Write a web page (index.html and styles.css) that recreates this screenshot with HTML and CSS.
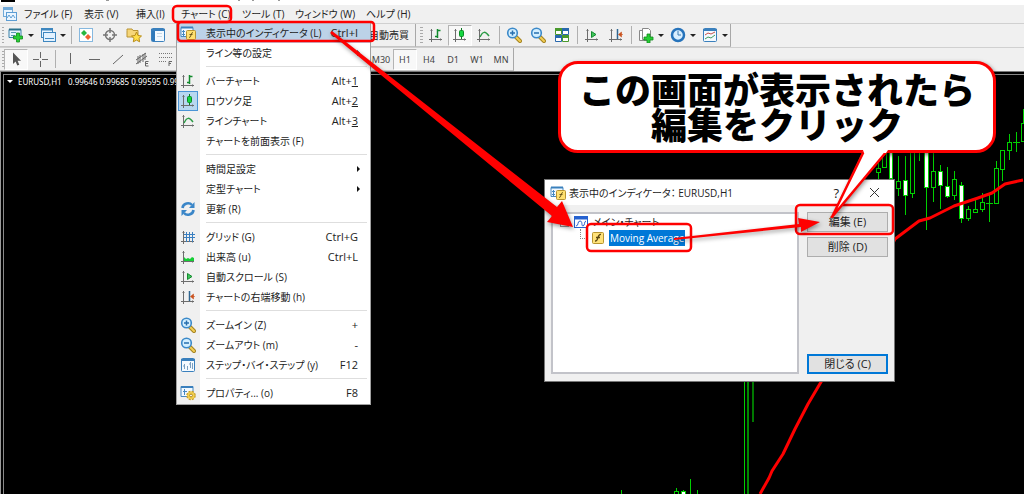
FILE: index.html
```html
<!DOCTYPE html>
<html lang="ja">
<head>
<meta charset="utf-8">
<title>EURUSD,H1</title>
<link rel="stylesheet" href="styles.css">
</head>
<body>
<svg class="defs" aria-hidden="true">
  <defs>
    <symbol id="axes" viewBox="0 0 16 16"><path d="M3.500 2v13M1 12.500h13M2.500 3.500h2M12.500 11.500v2" fill="none" stroke="#6c6c6c"/></symbol>
    <symbol id="bar" viewBox="0 0 16 16"><use href="#axes"/><path d="M9.500 2v9M9.500 3.500h3M7 9.500h2.500" fill="none" stroke="#118a2c" stroke-width="1.500"/></symbol>
    <symbol id="candle" viewBox="0 0 16 16"><use href="#axes"/><path d="M9.500 1v11" stroke="#0a7a20"/><rect x="7.500" y="3.500" width="4" height="6" rx="1" fill="#14d540" stroke="#0a8a24"/></symbol>
    <symbol id="line" viewBox="0 0 16 16"><use href="#axes"/><path d="M4 10c3-6 5-6 9-1" fill="none" stroke="#2a9a45" stroke-width="1.500"/></symbol>
    <symbol id="volume" viewBox="0 0 16 16"><use href="#axes"/><path d="M4 12V8l2 2 2-1 2 1 2-2 2 1v3z" fill="#15cf35"/></symbol>
    <symbol id="grid" viewBox="0 0 16 16"><use href="#axes"/><path d="M6.500 3v10M9.500 3v10M12.500 3v10M4 5.500h11M4 8.500h11" fill="none" stroke="#3a7fc0"/></symbol>
    <symbol id="scroll" viewBox="0 0 16 16"><use href="#axes"/><path d="M7.500 4.500l4.500 3-4.500 3z" fill="#3fc65b" stroke="#168a30"/></symbol>
    <symbol id="shift" viewBox="0 0 16 16"><use href="#axes"/><path d="M9.500 2v10" stroke="#2f6590" stroke-width="1.500"/><path d="M15 7.500h-3M10.500 7.500l3-2.500v5z" fill="#c9501c" stroke="#c9501c" stroke-width=".6"/></symbol>
    <symbol id="refresh" viewBox="0 0 16 16"><path d="M2.500 7c.5-5 7-6 9.500-3M13.500 9c-.5 5-7 6-9.500 3" fill="none" stroke="#3a86c8" stroke-width="2.600"/><path d="M14.500 1v6H9zM1.500 15V9H7z" fill="#3a86c8"/></symbol>
    <symbol id="lens" viewBox="0 0 16 16"><path d="M10 10l4 4" stroke="#a58320" stroke-width="4" stroke-linecap="round"/><path d="M10 10l4 4" stroke="#f3cf55" stroke-width="2" stroke-linecap="round"/><circle cx="6.500" cy="6" r="4.800" fill="#d3efff" stroke="#3b89c9" stroke-width="1.600"/></symbol>
    <symbol id="zoomin" viewBox="0 0 16 16"><use href="#lens"/><path d="M4 6h5M6.500 3.500v5" stroke="#276fae" stroke-width="1.500"/></symbol>
    <symbol id="zoomout" viewBox="0 0 16 16"><use href="#lens"/><path d="M4 6h5" stroke="#276fae" stroke-width="1.500"/></symbol>
    <symbol id="window" viewBox="0 0 16 16"><rect x="1.500" y="1.500" width="13" height="13" rx="1" fill="#f4faff" stroke="#3a80bd"/><path d="M1 3h14" stroke="#3a80bd" stroke-width="2"/></symbol>
    <symbol id="step" viewBox="0 0 16 16"><use href="#window"/><path d="M4.500 7v5M7.500 9v4M10.500 5v6M12.500 6v6M3 9h2M9 7h2" stroke="#7a9fc0" fill="none"/></symbol>
    <symbol id="indicator" viewBox="0 0 16 16"><path d="M1 2.500h12v9H1z" fill="#f2f9ff" stroke="#4789c2"/><path d="M1 2.500h12" stroke="#3a80bd" stroke-width="2"/><path d="M3.500 5v6M2 6.500h3M2 9.500h3" stroke="#4789c2"/><rect x="6.500" y="5.500" width="9" height="9" rx="1" fill="#ffe070" stroke="#b89432"/><path d="M13 7.500c-3 0-1 5-4 5M9.500 9.500h3" fill="none" stroke="#6d581c"/></symbol>
    <symbol id="props" viewBox="0 0 16 16"><path d="M1 1.500h12v10H1z" fill="#f2f9ff" stroke="#4789c2"/><path d="M1 2h12" stroke="#3a80bd" stroke-width="2"/><path d="M3 6.500h4M4.500 4v6" stroke="#4789c2"/><circle cx="11" cy="10.500" r="3.800" fill="#f3cf4d" stroke="#c79f2c" stroke-dasharray="2 1" stroke-width="2"/><circle cx="11" cy="10.500" r="3.500" fill="#f3cf4d"/><circle cx="11" cy="10.500" r="1.400" fill="#fff" stroke="#b08a20"/></symbol>
    <symbol id="neworder" viewBox="0 0 16 16"><path d="M1 2.500h12v8H1z" fill="#e8f5ff" stroke="#3a80a8"/><path d="M1 2.500h12" stroke="#2a718c" stroke-width="2"/><path d="M3 5.500h5M3 8.500h4" stroke="#5a9ab4"/><path d="M8.500 6h3v3h3v3h-3v3h-3v-3h-3V9h3z" fill="#27cf35" stroke="#118a1c" stroke-width=".8"/></symbol>
    <symbol id="windows" viewBox="0 0 16 16"><rect x="1.500" y="1.500" width="11" height="9" fill="#eaf5ff" stroke="#3f87bf"/><path d="M1 2.500h12" stroke="#3f87bf" stroke-width="2"/><rect x="3.500" y="5.500" width="12" height="9" fill="#e3f2ff" stroke="#3f87bf"/><path d="M5 11.500h9" stroke="#3f87bf"/></symbol>
    <symbol id="market" viewBox="0 0 16 16"><rect x="1.500" y="1.500" width="13" height="13" fill="#fff" stroke="#86b8df"/><path d="M6 3l3 3-3 3-3-3z" fill="#27b740"/><path d="M10 7l3 3-3 3-3-3z" fill="#f06030"/></symbol>
    <symbol id="target" viewBox="0 0 16 16"><circle cx="8" cy="8" r="4.500" fill="none" stroke="#777" stroke-width="1.500"/><path d="M8 1v5M8 10v5M1 8h5M10 8h5" stroke="#777" stroke-width="1.500"/></symbol>
    <symbol id="favorite" viewBox="0 0 16 16"><path d="M1 3.500V2h5l1 1.500h5V10H1z" fill="#f6d679" stroke="#b99434"/><path d="M10.500 5l1.500 3.500 3.500.5-2.500 2.300.6 3.500-3.100-1.700-3.200 1.700.7-3.500L5.500 9l3.500-.5z" fill="#ffde48" stroke="#b88c18"/></symbol>
    <symbol id="panel" viewBox="0 0 16 16"><use href="#window"/><path d="M2 4h3v10H2z" fill="#2f79ba"/><path d="M7 6.500h5M7 9.500h5" stroke="#c6d8e6"/></symbol>
    <symbol id="tiles" viewBox="0 0 16 16"><path d="M1.500 1.500h6v6h-6z" fill="#fff" stroke="#49992c"/><path d="M8.500 1.500h6v6h-6z" fill="#fff" stroke="#2868ad"/><path d="M1.500 8.500h6v6h-6z" fill="#fff" stroke="#2868ad"/><path d="M8.500 8.500h6v6h-6z" fill="#fff" stroke="#49992c"/><path d="M1 2.500h7M8 9.500h7" stroke="#49992c" stroke-width="3"/><path d="M8 2.500h7M1 9.500h7" stroke="#2868ad" stroke-width="3"/></symbol>
    <symbol id="addind" viewBox="0 0 16 16"><path d="M1.500 3.500h8v10h-8z" fill="#fff" stroke="#888"/><path d="M4.500 1.500h6l2 2v9h-8z" fill="#fff" stroke="#888"/><path d="M9 7h3v3h3v3h-3v3H9v-3H6v-3h3z" fill="#27cf35" stroke="#118a1c" stroke-width=".8"/></symbol>
    <symbol id="clock" viewBox="0 0 16 16"><circle cx="8" cy="8" r="6" fill="#d9efff" stroke="#2673bb" stroke-width="2.500"/><path d="M8 4v4h3" fill="none" stroke="#3f7cb2"/></symbol>
    <symbol id="template" viewBox="0 0 16 16"><use href="#window"/><path d="M3 8l3-2 3 1 4-2" fill="none" stroke="#c5524b"/><path d="M3 12l3-2 3 1 4-3" fill="none" stroke="#3f9c5e"/></symbol>
    <symbol id="pointer" viewBox="0 0 16 16"><path d="M5 1.500v11.500l2.600-2.400 1.700 4 2-.9-1.700-3.900H13z" fill="#555"/></symbol>
    <symbol id="cross" viewBox="0 0 16 16"><path d="M8.500 1v6M8.500 10v6M1 8.500h6M10 8.500h6" stroke="#666"/></symbol>
    <symbol id="vline" viewBox="0 0 16 16"><path d="M8.500 2v11" stroke="#666"/></symbol>
    <symbol id="hline" viewBox="0 0 16 16"><path d="M3 8.500h11" stroke="#666"/></symbol>
    <symbol id="trend" viewBox="0 0 16 16"><path d="M3 13L13 4" stroke="#666"/></symbol>
    <symbol id="channel" viewBox="0 0 16 16"><path d="M2 9l10-7M2 13L13 5M4 5v8M6 4v8M9 3v8M11 2v7" stroke="#666"/><path d="M14.500 10.500h-3v4.500h3M11.500 12.500h2.500" fill="none" stroke="#666"/></symbol>
    <symbol id="fibo" viewBox="0 0 16 16"><path d="M1 2.500h14M1 6.500h14M1 10.500h8" stroke="#777" stroke-dasharray="1 1"/><path d="M14 10.500h-3V15M11 12.500h2" fill="none" stroke="#666"/></symbol>
    <symbol id="func" viewBox="0 0 16 16"><rect x="2.500" y="2.500" width="11" height="11" rx="1" fill="#ffe27a" stroke="#b8952e"/><path d="M11 4.500c-4-1-2 7-6 6.500M6 7.500h4" fill="none" stroke="#5c4812" stroke-width="1.300"/></symbol>
    <symbol id="mainchart" viewBox="0 0 16 16"><rect x="1.500" y="2.500" width="13" height="11" fill="#fff" stroke="#2662d0"/><path d="M1 4h14" stroke="#2662d0" stroke-width="3"/><path d="M3 12c3 0 1-5 4-5s1 5 3 5 1-5 3-5" fill="none" stroke="#2662d0"/></symbol>
    <symbol id="app" viewBox="0 0 16 16"><rect x="1.500" y="1.500" width="9" height="9" fill="#eaf5ff" stroke="#70a9d8"/><path d="M1 3h10" stroke="#70a9d8" stroke-width="2"/><rect x="4.500" y="6.500" width="10" height="8" fill="#eaf5ff" stroke="#5d9dd3"/><path d="M5 12l2-3 2 3 2-3 2 3" fill="none" stroke="#5d9dd3"/></symbol>
  </defs>
</svg>

<div class="titlebar"><svg width="340" height="5" aria-hidden="true"><path d="M1 0h14v2H1z" fill="#000"/><path d="M106 .5h3M238 .5h2M252 .5h2M278 .5h2" stroke="#999"/></svg></div>

<nav class="menubar">
  <svg class="icon app-icon"><use href="#app"/></svg>
  <button>ファイル (F)</button>
  <button>表示 (V)</button>
  <button>挿入(I)</button>
  <button class="open">チャート (C)</button>
  <button>ツール (T)</button>
  <button>ウィンドウ (W)</button>
  <button>ヘルプ (H)</button>
</nav>

<div class="toolbar">
  <div class="group group-main">
    <button class="tool drop" aria-label="新規チャート"><svg class="icon"><use href="#neworder"/></svg></button>
    <button class="tool drop" aria-label="ウィンドウ"><svg class="icon"><use href="#windows"/></svg></button>
    <span class="divider"></span>
    <button class="tool" aria-label="気配値"><svg class="icon"><use href="#market"/></svg></button>
    <button class="tool" aria-label="データ"><svg class="icon"><use href="#target"/></svg></button>
    <button class="tool" aria-label="お気に入り"><svg class="icon"><use href="#favorite"/></svg></button>
    <button class="tool" aria-label="ターミナル"><svg class="icon"><use href="#panel"/></svg></button>
    <button class="auto">自動売買</button>
  </div>
  <div class="group">
    <button class="tool" aria-label="バーチャート"><svg class="icon"><use href="#bar"/></svg></button>
    <button class="tool pressed" aria-label="ロウソク足"><svg class="icon"><use href="#candle"/></svg></button>
    <button class="tool" aria-label="ラインチャート"><svg class="icon"><use href="#line"/></svg></button>
    <span class="divider"></span>
    <button class="tool" aria-label="ズームイン"><svg class="icon"><use href="#zoomin"/></svg></button>
    <button class="tool" aria-label="ズームアウト"><svg class="icon"><use href="#zoomout"/></svg></button>
    <button class="tool" aria-label="整列"><svg class="icon"><use href="#tiles"/></svg></button>
    <span class="divider"></span>
    <button class="tool" aria-label="自動スクロール"><svg class="icon"><use href="#scroll"/></svg></button>
    <button class="tool" aria-label="右端移動"><svg class="icon"><use href="#shift"/></svg></button>
    <span class="divider"></span>
    <button class="tool drop" aria-label="インディケータ"><svg class="icon"><use href="#addind"/></svg></button>
    <button class="tool drop" aria-label="時間足"><svg class="icon"><use href="#clock"/></svg></button>
    <button class="tool drop" aria-label="定型チャート"><svg class="icon"><use href="#template"/></svg></button>
  </div>
</div>

<div class="toolbar">
  <div class="group group-lines">
    <button class="tool pressed" aria-label="カーソル"><svg class="icon"><use href="#pointer"/></svg></button>
    <button class="tool" aria-label="クロスヘア"><svg class="icon"><use href="#cross"/></svg></button>
    <span class="divider"></span>
    <button class="tool" aria-label="垂直線"><svg class="icon"><use href="#vline"/></svg></button>
    <button class="tool" aria-label="水平線"><svg class="icon"><use href="#hline"/></svg></button>
    <button class="tool" aria-label="トレンドライン"><svg class="icon"><use href="#trend"/></svg></button>
    <button class="tool" aria-label="チャネル"><svg class="icon"><use href="#channel"/></svg></button>
    <button class="tool" aria-label="フィボナッチ"><svg class="icon"><use href="#fibo"/></svg></button>
    <span class="timeframes">
      <button class="tool">M30</button>
      <button class="tool pressed">H1</button>
      <button class="tool">H4</button>
      <button class="tool">D1</button>
      <button class="tool">W1</button>
      <button class="tool">MN</button>
    </span>
  </div>
</div>

<main class="chart">
  <div class="chart-inner"><p class="quote"><span class="quote-mark"></span>EURUSD,H1&nbsp;&nbsp; 0.99646 0.99685 0.99595 0.99</p></div>
</main>

<svg class="layer plot" width="1024" height="494" aria-hidden="true">
  <g class="crisp">
    <path class="wick" d="M878.500 163v17M898.500 156v40M905.500 156v59M912.500 150v48M919.500 150v11M926.500 150v80M933.500 150v52M940.500 165v44M947.500 167v31M954.500 171v29M961.500 182v41M968.500 206v15M975.500 199v14M982.500 193v19M989.500 193v29M986 203.500h7M996.500 161v42M1002.500 150v31M1009.500 134v26M1016.500 132v20M1013 142.500h7M1023.500 109v33M744.500 381v113M621.500 490v4M676.500 488v6M683.500 490v4M690.500 479v15M697.500 490v4"/>
    <path d="M748 381v113" stroke="#008800" stroke-width="2"/><path d="M753 381v41" stroke="#007800" stroke-width="2"/>
    <path class="hollow" d="M876.500 168.500h4v4h-4zM882.500 150.500h4v17h-4zM896.500 181.500h4v7h-4zM910.500 150.500h4v43h-4zM931.500 171.500h4v16h-4zM952.500 179.500h4v16h-4zM966.500 209.500h4v9h-4zM973.500 209.500h4v3h-4zM980.500 202.500h4v7h-4zM994.500 168.500h4v35h-4zM1000.500 150.500h4v19h-4zM1007.500 142.500h4v8h-4zM1021.500 123.500h4v18h-4zM674.500 491.500h4v3h-4z"/>
    <path class="solid" d="M889.500 150.500h3v28h-3zM903.500 180.500h4v15h-4zM924.500 150.500h4v37h-4zM938.500 171.500h4v14h-4zM945.500 186.500h4v10h-4zM959.500 185.500h4v33h-4zM681.500 491.500h4v3h-4z"/>
  </g>
  <path d="M760 494l9-16 3-7 11-17 12-25 13-25 13-22 74-143 24-18 11-3 24-12 24-8 14-5 13-9 18-4" class="average"/>
</svg>

<div class="menu" role="menu">
  <button class="item active"><svg class="icon"><use href="#indicator"/></svg><span>表示中のインディケータ (L)</span><kbd>Ctrl+I</kbd></button>
  <button class="item sub"><i></i><span>ライン等の設定</span></button>
  <hr>
  <button class="item"><svg class="icon"><use href="#bar"/></svg><span>バーチャート</span><kbd>Alt+<u>1</u></kbd></button>
  <button class="item checked"><svg class="icon"><use href="#candle"/></svg><span>ロウソク足</span><kbd>Alt+<u>2</u></kbd></button>
  <button class="item"><svg class="icon"><use href="#line"/></svg><span>ラインチャート</span><kbd>Alt+<u>3</u></kbd></button>
  <button class="item"><i></i><span>チャートを前面表示 (F)</span></button>
  <hr>
  <button class="item sub"><i></i><span>時間足設定</span></button>
  <button class="item sub"><i></i><span>定型チャート</span></button>
  <button class="item"><svg class="icon"><use href="#refresh"/></svg><span>更新 (R)</span></button>
  <hr>
  <button class="item"><svg class="icon"><use href="#grid"/></svg><span>グリッド (G)</span><kbd>Ctrl+G</kbd></button>
  <button class="item"><svg class="icon"><use href="#volume"/></svg><span>出来高 (u)</span><kbd>Ctrl+L</kbd></button>
  <button class="item"><svg class="icon"><use href="#scroll"/></svg><span>自動スクロール (S)</span></button>
  <button class="item"><svg class="icon"><use href="#shift"/></svg><span>チャートの右端移動 (h)</span></button>
  <hr>
  <button class="item"><svg class="icon"><use href="#zoomin"/></svg><span>ズームイン (Z)</span><kbd>+</kbd></button>
  <button class="item"><svg class="icon"><use href="#zoomout"/></svg><span>ズームアウト (m)</span><kbd>-</kbd></button>
  <button class="item"><svg class="icon"><use href="#step"/></svg><span>ステップ・バイ・ステップ (y)</span><kbd>F12</kbd></button>
  <hr>
  <button class="item"><svg class="icon"><use href="#props"/></svg><span>プロパティ... (o)</span><kbd>F8</kbd></button>
</div>

<section class="dialog" role="dialog" aria-labelledby="dialog-title">
  <header class="dialog-head">
    <svg class="icon"><use href="#indicator"/></svg>
    <h1 id="dialog-title">表示中のインディケータ： EURUSD,H1</h1>
    <button class="help">?</button>
    <button class="close" aria-label="閉じる"><svg width="11" height="11"><path d="M1 1l9 9M10 1l-9 9" stroke="#333" fill="none"/></svg></button>
  </header>
  <div class="dialog-body">
    <div class="tree">
      <div class="node"><span class="expander"></span><svg class="icon"><use href="#mainchart"/></svg><span>メイン・チャート</span></div>
      <div class="node child"><span class="branch"></span><svg class="icon"><use href="#func"/></svg><span class="selected">Moving Average</span></div>
    </div>
    <div class="actions">
      <button>編集 (E)</button>
      <button>削除 (D)</button>
      <button class="default">閉じる (C)</button>
    </div>
  </div>
</section>

<p class="callout">この画面が表示されたら<br>編集をクリック</p>

<svg class="layer notes" width="1024" height="494" aria-hidden="true">
  <g fill="none" stroke="#f00" stroke-width="2.500">
    <rect x="173" y="6" width="58" height="16" rx="4"/>
    <rect x="178" y="22" width="196" height="19" rx="3"/>
    <rect x="587" y="224" width="104" height="27" rx="4"/>
    <rect x="796" y="205" width="97" height="29" rx="4"/>
  </g>
  <g class="shadow" fill="#f00">
    <path d="M330 33l2-2L557 207l5-6 11 26-26-5 5-6z"/>
    <path d="M674 238l125-14-1-6 22 4-19 10v-5l-127 13z"/>
  </g>
  <g class="shadow"><path d="M863 151L832 217l55-66z" fill="#fff"/><path d="M864 151L832 217l55-66" fill="none" stroke="#f00" stroke-width="2.500" stroke-linejoin="round"/></g>
  <path d="M862 147h28l-4 6h-22z" fill="#fff"/>
</svg>
</body>
</html>
```
FILE: styles.css
```css
* { box-sizing: border-box; }

body {
  margin: 0;
  min-height: 100vh;
  display: flex;
  flex-direction: column;
  position: relative;
  overflow: hidden;
  background: #f0f0f0;
  color: #222;
  font-family: "Open Sans", "Noto Sans CJK JP", sans-serif;
  font-size: 11px;
  font-feature-settings: "palt";
}

button {
  margin: 0;
  padding: 0;
  border: 0;
  background: none;
  color: inherit;
  font: inherit;
  font-feature-settings: inherit;
  white-space: nowrap;
}

p, h1 { margin: 0; font-weight: 400; }
.defs { position: absolute; width: 0; height: 0; }
.icon { width: 16px; height: 16px; flex: none; display: block; }

.titlebar { height: 5px; background: #fff; }
.titlebar svg { display: block; }

.menubar {
  display: grid;
  grid-template-columns: 24px 60px 52px 45px 61px 53px 71px 60px;
  height: 18px;
  align-items: center;
  font-size: 10px;
  line-height: 18px;
}
.menubar button { text-align: left; }
.app-icon { margin-left: 2px; }

.toolbar { display: flex; height: 24px; border-top: 1px solid #d0d0d0; }
.group {
  display: flex;
  align-items: center;
  padding-left: 8px;
  border-right: 1px solid #a8a8a8;
  border-bottom: 1px solid #c4c4c4;
  background: repeating-linear-gradient(#aaa 0 1px, #f0f0f0 1px 3px) 4px 3px / 3px 17px no-repeat;
}
.group-main { width: 416px; padding-left: 4px; background-position: 2px 3px; background-size: 2px 17px; }
.group-lines { width: 514px; padding-left: 4px; background-position: 2px 3px; background-size: 2px 17px; }
.tool {
  display: flex;
  align-items: center;
  justify-content: center;
  width: 24px;
  height: 21px;
}
.drop { width: 32px; justify-content: flex-start; padding-left: 4px; }
.drop::after {
  content: "";
  margin-left: 4px;
  border: 3px solid transparent;
  border-top-color: #222;
  border-bottom: 0;
}
.pressed { background: #f8f8f8; border: 1px solid #b4b4b4; border-right-color: #fff; border-bottom-color: #fff; }
.divider { width: 6px; height: 18px; background: linear-gradient(#b0b0b0, #b0b0b0) 3px 0 / 1px 100% no-repeat; }
.auto { margin-left: auto; padding-right: 6px; font-size: 10px; line-height: 20px; font-feature-settings: normal; }
.timeframes { display: flex; margin-left: auto; font-family: "Noto Sans", sans-serif; font-size: 9px; color: #444; }

.chart { flex: 1; display: flex; padding: 2px 0 0 2px; background: #000; border-top: 1px solid #777; border-left: 1px solid #999; }
.chart-inner { flex: 1; border-top: 1px solid #888; border-left: 1px solid #888; }
.quote { display: flex; align-items: center; padding-left: 3px; color: #fff; font-family: "Noto Sans", sans-serif; font-size: 8px; line-height: 13px; white-space: nowrap; }
.quote-mark { margin-right: 5px; border: 3px solid transparent; border-top-color: #fff; border-bottom: 0; }

.layer { position: absolute; top: 0; left: 0; pointer-events: none; }
.plot { z-index: 1; }
.crisp { shape-rendering: crispEdges; }
.wick { stroke: #00d000; }
.hollow { fill: #000; stroke: #00d000; }
.solid { fill: #fff; stroke: #00d000; }
.average { fill: none; stroke: #f00; stroke-width: 3; stroke-linejoin: round; }

.menu {
  position: absolute;
  z-index: 2;
  top: 22px;
  left: 176px;
  width: 195px;
  padding-bottom: 1px;
  border: 1px solid #a0a0a0;
  background: linear-gradient(90deg, #f0f0f0 23px, #fff 23px);
  font-size: 10px;
}
.item { display: flex; align-items: center; width: 100%; height: 20px; padding: 0 12px 0 3px; gap: 10px; line-height: 20px; text-align: left; }
.item i { width: 16px; }
.item span { flex: 1; }
.item kbd { font-family: inherit; font-size: 11px; }
.item span + kbd { margin-left: -8px; }
.item.active { background: #bcd2e8; }
.item.checked .icon { outline: 1px solid #4a94d6; outline-offset: 1px; background: #b8d7f0; box-shadow: 0 0 0 1px #b8d7f0; }
.item.sub::after { content: ""; margin-right: -2px; border: 3px solid transparent; border-left-color: #111; border-right: 0; }
.menu hr { height: 1px; margin: 3px 3px 4px 29px; border: 0; background: #dedede; }

.dialog { position: absolute; z-index: 3; top: 179px; left: 544px; width: 351px; height: 203px; display: flex; flex-direction: column; border: 1px solid #777; background: #f0f0f0; }
.dialog-head { display: flex; align-items: center; height: 25px; padding: 0 14px 0 5px; background: #fff; }
.dialog-head h1 { flex: 1; margin-left: 3px; font-size: 10px; line-height: 24px; }
.help { font-size: 13px; }
.close { width: 11px; height: 11px; margin-left: 30px; }
.close svg { display: block; }
.dialog-body { flex: 1; display: flex; gap: 8px; padding: 7px 6px; }
.tree { flex: 1; border: 2px solid #c2c3c9; padding: 0 7px; background: #fff; font-size: 10px; }
.node { display: flex; align-items: center; height: 16px; gap: 4px; line-height: 16px; white-space: nowrap; }
.node.child { padding-left: 20px; gap: 3px; }
.expander { width: 9px; height: 9px; border: 1px solid #999; }
.branch { width: 7px; height: 10px; margin-bottom: 8px; border-left: 1px dotted #888; border-bottom: 1px dotted #888; }
.selected { padding: 0 1px; background: #0078d7; color: #fff; }
.actions { display: flex; flex-direction: column; gap: 5px; width: 81px; }
.actions button { height: 20px; border: 1px solid #adadad; background: #e1e1e1; line-height: 16px; }
.actions .default { margin-top: auto; border: 2px solid #0078d7; }

.callout {
  position: absolute;
  z-index: 4;
  top: 61px;
  left: 558px;
  width: 438px;
  padding: 7px 0 9px;
  border: 3px solid #f00;
  border-radius: 20px;
  background: #fff;
  box-shadow: 1px 2px 4px #0008;
  color: #000;
  font-family: "Noto Sans CJK JP", sans-serif;
  font-size: 36px;
  font-weight: 900;
  font-feature-settings: normal;
  line-height: 35px;
  text-align: center;
}
.notes { z-index: 5; }
.shadow { filter: drop-shadow(1px 2px 2px #0006); }
```
